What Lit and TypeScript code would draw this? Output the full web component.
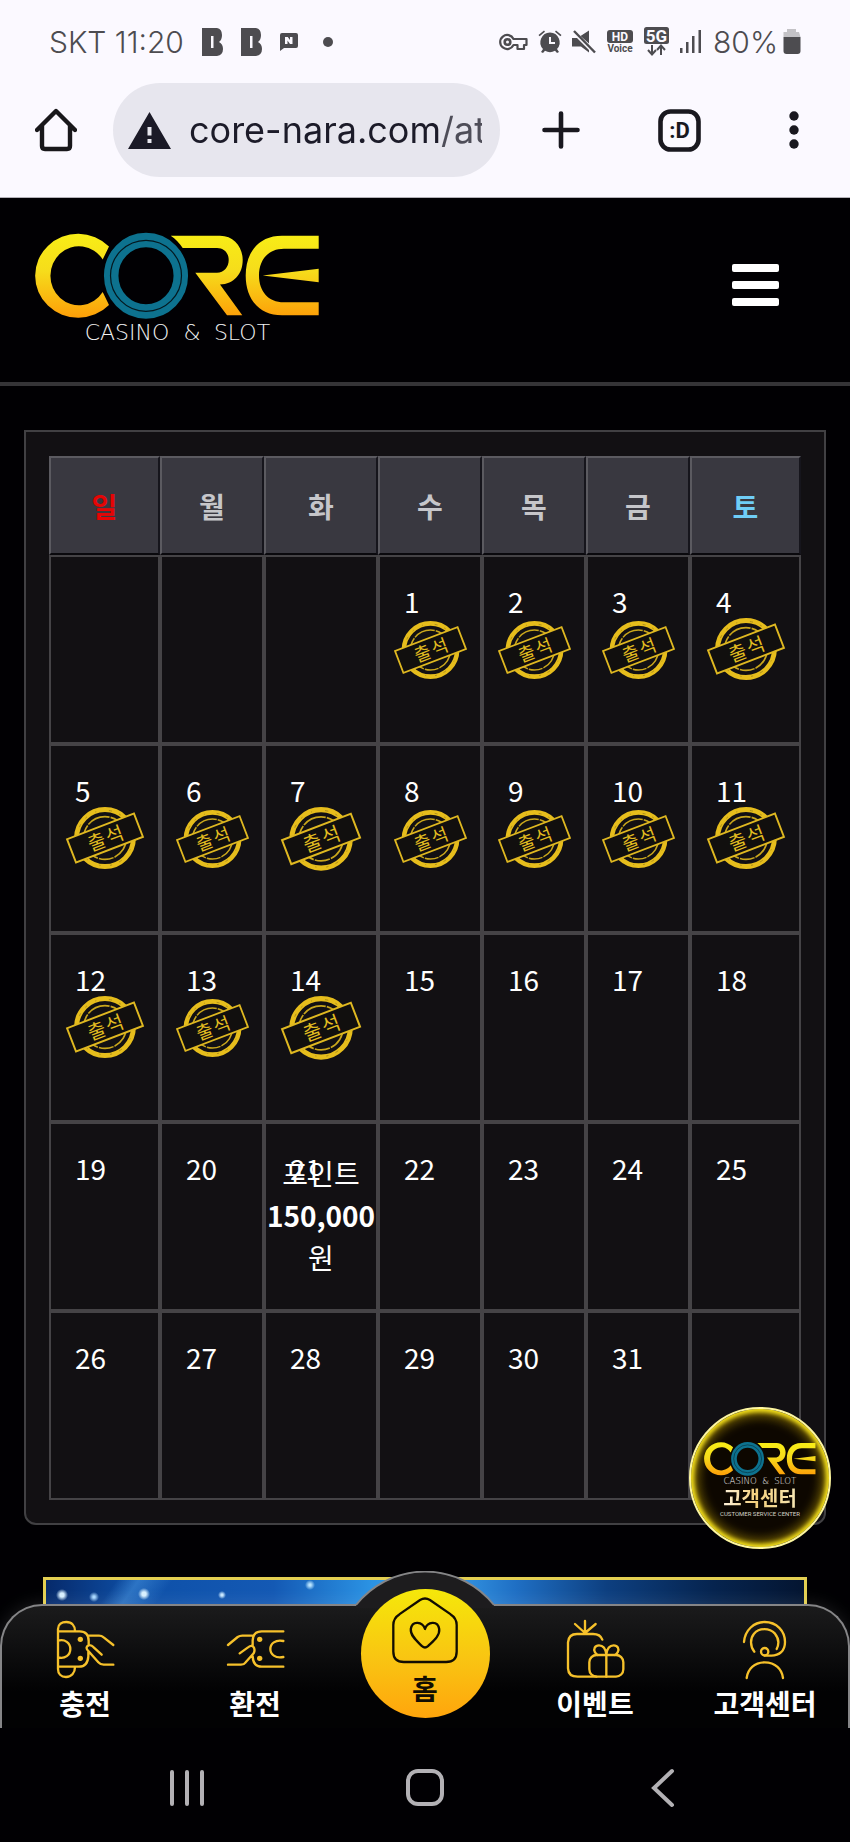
import { LitElement, html, svg, css } from "lit";
import { customElement, property } from "lit/decorators.js";

interface Day {
  day: number | null;
  stamped?: boolean;
  reward?: string;
}

const WEEKDAYS = [
  { label: "일", tone: "sun" },
  { label: "월", tone: "" },
  { label: "화", tone: "" },
  { label: "수", tone: "" },
  { label: "목", tone: "" },
  { label: "금", tone: "" },
  { label: "토", tone: "sat" },
];

const FIRST_WEEKDAY = 3;
const DAYS_IN_MONTH = 31;
const LAST_STAMPED = 14;

function buildWeeks(): Day[][] {
  const cells: Day[] = [];
  for (let i = 0; i < 35; i++) {
    const day = i - FIRST_WEEKDAY + 1;
    if (day < 1 || day > DAYS_IN_MONTH) cells.push({ day: null });
    else
      cells.push({
        day,
        stamped: day <= LAST_STAMPED,
        reward: day === 21 ? "150,000" : undefined,
      });
  }
  return [0, 1, 2, 3, 4].map((w) => cells.slice(w * 7, w * 7 + 7));
}

@customElement("core-logo")
export class CoreLogo extends LitElement {
  static styles = css`
    :host { display: block; }
    svg { display: block; width: 100%; height: auto; overflow: visible; }
    .tag { font-family: "DejaVu Sans", sans-serif; font-weight: 200; font-size: 22px; fill: #f2f2f2; text-anchor: middle; }
  `;
  render() {
    return html`<svg viewBox="35 38 285 112" role="img" aria-label="CORE CASINO &amp; SLOT">
      <defs>
        <linearGradient id="gold" gradientUnits="userSpaceOnUse" x1="0" y1="38" x2="0" y2="123">
          <stop offset="0" stop-color="#f8ee16" />
          <stop offset="0.45" stop-color="#f6dc1b" />
          <stop offset="1" stop-color="#fd9e08" />
        </linearGradient>
      </defs>
      <g fill="url(#gold)">
        <path d="M109 51.5A43 42 0 1 0 109 110L102.7 97A28.5 29.5 0 1 1 102.7 64.5Z" />
        <path d="M170.7 40.7H220C234 40.7 242.7 52 242.7 65C242.7 79 234 89 220 89.5L242.3 120.3H227L195.3 77.7H217C224 77.7 228.7 72 228.7 65C228.7 58 224 53 217 53H182.7C179.5 48 175.5 44 170.7 40.7Z" />
        <path d="M318.7 40.7H282C258 40.7 245.7 58 245.7 80.5C245.7 104 259 120.3 282 120.3H318.7V107.3H284C268 107.3 259 96 259 80.5C259 65 268 53.7 284 53.7H318.7Z" />
        <path d="M262.7 80.5L318.7 73.7V87.3Z" />
      </g>
      <ellipse cx="146" cy="80.8" rx="34.8" ry="35.7" fill="none" stroke="#0d728f" stroke-width="14.5" />
      <ellipse cx="146" cy="80.8" rx="35.5" ry="35.5" fill="none" stroke="#04181f" stroke-width="1.2" />
      <text class="tag" x="127" y="145">CASINO</text>
      <text class="tag" x="192" y="145">&amp;</text>
      <text class="tag" x="242" y="145">SLOT</text>
    </svg>`;
  }
}

@customElement("attendance-stamp")
export class AttendanceStamp extends LitElement {
  static styles = css`
    :host { display: block; width: 71%; margin: 0 auto; }
    svg { display: block; width: 100%; height: auto; overflow: visible; }
    .word { font-family: "Noto Sans CJK KR", sans-serif; font-size: 18px; font-weight: 400; fill: #e2bd20; text-anchor: middle; }
  `;
  render() {
    return html`<svg viewBox="0 0 71 58">
      <circle cx="35.5" cy="29" r="26.6" fill="none" stroke="#e6bd1c" stroke-width="4.6" />
      <circle cx="35.5" cy="29" r="26" fill="none" stroke="#a3861a" stroke-width="0.8" stroke-dasharray="2 9 1 12 3 7" />
      <circle cx="35.5" cy="29" r="20" fill="none" stroke="#c9a61c" stroke-width="1.5" stroke-dasharray="22 1 14 1" />
      <g transform="rotate(-21 35.5 29)">
        <rect x="2" y="17.3" width="67" height="23.4" fill="#110f0e" stroke="#dfb821" stroke-width="1.8" />
        <text class="word" x="27" y="36">출</text>
        <text class="word" x="45" y="36">석</text>
      </g>
    </svg>`;
  }
}

@customElement("phone-status")
export class PhoneStatus extends LitElement {
  static styles = css`
    :host {
      display: flex; justify-content: space-between; align-items: center;
      height: 83px; padding: 0 49px; box-sizing: border-box;
      font: 300 30px/40px Inter, sans-serif; color: #4d4c50;
    }
    svg { display: block; fill: #4d4c50; }
    .group { display: flex; align-items: center; }
    .left { gap: 18px; }
    .right { gap: 10px; }
    .power { display: flex; align-items: center; gap: 5px; }
    .hd { font: 700 12px Roboto, sans-serif; fill: #fbf9ff; }
    .voice { font: 700 10px Roboto, sans-serif; }
    .g5 { font: 700 17px Roboto, sans-serif; fill: #fbf9ff; }
    .mid { text-anchor: middle; }
  `;
  render() {
    const b = html`<svg width="21" height="28" viewBox="0 0 21 28"><path fill-rule="evenodd" d="M0 0H15Q20 1 20 7Q20 12 17 14Q21 16 21 21Q21 27 15 28H0ZM9 8V20H11.500V8Z" /></svg>`;
    return html`
      <div class="group left">
        <span>SKT 11:20</span>${b}${b}
        <svg width="18" height="18" viewBox="0 0 18 18"><path fill-rule="evenodd" d="M2 0H16Q18 0 18 2V13Q18 15 16 15H4L0 18V2Q0 0 2 0ZM5 11H7.500V7.500L10 11H12.500V4H10V7L7.800 4H5Z" /></svg>
        <svg width="24" height="10" viewBox="0 0 24 10"><circle cx="12" cy="5" r="5" /></svg>
      </div>
      <div class="group right">
        <svg width="29" height="18" viewBox="0 0 29 18"><g fill="none" stroke="#4d4c50" stroke-width="2.600"><circle cx="8.500" cy="9" r="2.800" /><path stroke-width="2.200" stroke-linejoin="round" d="M14.500 6A7 7 0 1 0 14.500 12H18.500V16H25V12H27.500V6Z" /></g></svg>
        <svg width="24" height="24" viewBox="0 0 24 24"><path fill-rule="evenodd" d="M12 2.500A9.800 9.800 0 0 1 19 19L21 22L19 23L17 20.800A10 10 0 0 1 7 20.800L5 23L3 22L5 19A9.800 9.800 0 0 1 12 2.500ZM11 7V14H17V12H13V7Z" /><path d="M0.500 5L6 0.500L7 1.800L1.600 6.300ZM23.500 5L18 0.500L17 1.800L22.400 6.300Z" /></svg>
        <svg width="24" height="24" viewBox="0 0 24 24"><path d="M0 8H5L17 20V22.500L9 16.500H0ZM8.500 6L17 0.500V13.500Z" /><path d="M2 1L23 22.500" stroke="#4d4c50" stroke-width="2.400" /></svg>
        <svg width="28" height="24" viewBox="0 0 28 24"><rect x="1" width="26" height="13" rx="3" /><text class="hd mid" x="14" y="10.800">HD</text><text class="voice mid" x="14" y="22">Voice</text></svg>
        <svg width="25" height="30" viewBox="0 0 25 30"><rect width="25" height="17" rx="2.500" /><text class="g5 mid" x="12.500" y="14.500">5G</text><path d="M8 18V27M4 23L8 27.500L12 23M17 28V19M13 23L17 18.500L21 23" fill="none" stroke="#4d4c50" stroke-width="2" /></svg>
        <svg width="24" height="24" viewBox="0 0 24 24"><path d="M1 18H3.500V23H1ZM7 12H9.500V23H7ZM13 6H15.500V23H13ZM19.500 0H22V23H19.500Z" /></svg>
        <div class="power">
          <span>80%</span>
          <svg width="18" height="25" viewBox="0 0 18 25"><path fill="#c3c2c6" d="M4 0H13V3H16L17.500 8H0.500V3H4Z" /><path d="M0.500 8H17.500V22Q17.500 25 14.500 25H3.500Q0.500 25 0.500 22Z" /></svg>
        </div>
      </div>`;
  }
}

@customElement("browser-bar")
export class BrowserBar extends LitElement {
  static styles = css`
    :host { display: flex; align-items: center; padding: 0 39px 20px 35px; border-bottom: 1px solid #b4b2b9; }
    button { border: 0; padding: 0; background: none; display: block; flex: none; }
    svg { display: block; }
    .address {
      flex: 1; min-width: 0; height: 94px; margin: 0 40px 0 36px; padding: 0 18px 0 15px;
      box-sizing: border-box; border-radius: 47px; background: #e7e6ee;
      display: flex; align-items: center; gap: 18px;
    }
    .address svg { flex: none; }
    .url {
      flex: 1; min-width: 0; height: 60px; border: 0; padding: 0; outline: 0;
      font: 400 36px/60px Inter, sans-serif; color: transparent;
      background: linear-gradient(90deg, #1c1b29 251px, #4e4d58 251px); background-clip: text;
    }
    .actions { display: flex; align-items: center; gap: 76px; }
    .face { font: 700 22px Roboto, sans-serif; fill: #19181f; text-anchor: middle; }
  `;
  render() {
    return html`
      <button aria-label="Home"><svg width="42" height="44" viewBox="0 0 42 44"><path d="M2 22L21 3L40 22M7 18V38Q7 41 10 41H32Q35 41 35 38V18" fill="none" stroke="#19181b" stroke-width="4.400" stroke-linejoin="round" stroke-linecap="round" /></svg></button>
      <div class="address">
        <svg width="43" height="37" viewBox="0 0 43 37"><path fill="#1b1a27" fill-rule="evenodd" d="M21.500 0L43 37H0ZM19.500 15V23.500H23.500V15ZM19.500 27V31H23.500V27Z" /></svg>
        <input class="url" type="text" aria-label="Address" .value=${"core-nara.com/at"} />
      </div>
      <div class="actions">
        <button aria-label="New tab"><svg width="42" height="42" viewBox="0 0 42 42"><path d="M21 4.500V37.500M4.500 21H37.500" stroke="#19181f" stroke-width="4.600" stroke-linecap="round" /></svg></button>
        <button aria-label="Tabs"><svg width="43" height="43" viewBox="0 0 43 43"><rect x="2.500" y="2.500" width="38" height="38" rx="10" fill="none" stroke="#19181f" stroke-width="4.600" /><text class="face" x="21.500" y="29">:D</text></svg></button>
        <button aria-label="More"><svg width="34" height="40" viewBox="0 0 34 40"><g fill="#19181f"><circle cx="17" cy="6" r="4.700" /><circle cx="17" cy="20" r="4.700" /><circle cx="17" cy="34" r="4.700" /></g></svg></button>
      </div>`;
  }
}

@customElement("attendance-calendar")
export class AttendanceCalendar extends LitElement {
  @property({ attribute: false }) weeks: Day[][] = buildWeeks();

  static styles = css`
    :host {
      display: block; margin: 44px 24px 52px; padding: 24px 23px 23px;
      border: 2px solid #414043; border-radius: 0 0 12px 12px; background: #121013;
    }
    table { width: 100%; table-layout: fixed; border-collapse: separate; border-spacing: 0; font-size: 28px; line-height: 42px; }
    th, td { box-sizing: border-box; padding: 0; text-align: center; vertical-align: middle; }
    th {
      height: 99px; background: #393840; color: #c6c6ca; font-weight: 700;
      border: 2px solid; border-color: #5b5a60 #16151c #0a090d #5b5a60;
    }
    .sun { color: #e50505; }
    .sat { color: #6fcdf6; }
    td { position: relative; height: 189px; border: 2px solid #454346; color: #fff; }
    .date { position: absolute; top: 23px; left: 24px; }
    .reward { display: block; margin: 0 -2px; padding-bottom: 4px; }
    .w1 { width: 111px; }
    .w2 { width: 104px; }
    .w3 { width: 114px; }
  `;
  render() {
    return html`<table aria-label="출석 달력">
      <colgroup><col class="w1" /><col class="w2" /><col class="w3" /><col class="w2" /><col class="w2" /><col class="w2" /><col class="w1" /></colgroup>
      <thead><tr>${WEEKDAYS.map((d) => html`<th scope="col" class=${d.tone}>${d.label}</th>`)}</tr></thead>
      <tbody>
        ${this.weeks.map((week) => html`<tr>${week.map((d) => html`<td>
          ${d.day ? html`<span class="date">${d.day}</span>` : null}
          ${d.stamped ? html`<attendance-stamp></attendance-stamp>` : null}
          ${d.reward ? html`<span class="reward">포인트<br /><b>${d.reward}</b><br />원</span>` : null}
        </td>`)}</tr>`)}
      </tbody>
    </table>`;
  }
}

const ICONS = {
  charge: svg`<path d="M3 31V137M3 31V24C3 10 14 3 28 3C44 3 54 14 54 30M3 31H68Q95 31 95 60V72M3 137V144C3 158 12 168 27 168C43 168 54 156 54 138M3 137H66Q92 137 94 106V92M3 59C24 53 40 66 40 84C40 102 24 115 3 109M92 44H126Q134 44 140 49L169 72M169 131H140Q130 131 124 124L92 88Q84 78 95 73Q103 71 110 79L134 101" /><circle class="dot" cx="70" cy="55" r="8" /><circle class="dot" cx="70" cy="112" r="8" />`,
  withdraw: svg`<path d="M169 31H104Q78 31 77 58V72M169 137H104Q78 137 77 106M169 60C145 55 130 68 130 84C130 100 145 113 169 108M3 72L32 48Q38 44 46 44H76M3 131H42Q51 131 56 124L80 97Q86 84 78 76Q72 72 63 79L38 97" /><circle class="dot" cx="98" cy="55" r="8" /><circle class="dot" cx="98" cy="112" r="8" />`,
  event: svg`<path d="M106 56Q100 39 78 39H30Q5 39 3 64V142Q4 167 32 167H88M54 38V0M54 36L24 9M54 36L86 9M118 102V167M118 100C116 84 108 73 96 73C84 73 78 84 84 94Q87 100 92 102M118 100C120 84 128 73 140 73C152 73 158 84 152 94Q149 100 144 102" /><rect x="67" y="102" width="102" height="65" rx="22" />`,
  support: svg`<path d="M24 63C27 27 54 3 86 3C122 3 147 30 147 63C147 90 130 104 106 104H86M55 92C42 76 42 52 54 38C70 20 100 20 117 38C130 54 130 68 122 84M32 171C35 145 55 124 86 124C118 124 138 145 141 171" /><circle cx="86" cy="92" r="11" />`,
};

@customElement("bottom-nav")
export class BottomNav extends LitElement {
  static styles = css`
    :host { display: block; position: relative; }
    nav {
      box-sizing: border-box; height: 124px; padding-top: 15px;
      border: 2px solid #858587; border-bottom: 0; border-radius: 42px 42px 0 0;
      background: linear-gradient(#1b1b1c, #020203 70%);
      box-shadow: 0 0 18px rgba(255, 255, 255, 0.12);
    }
    .items { display: grid; grid-template-columns: repeat(5, 1fr); align-items: start; justify-items: center; margin: 0 -2px; }
    a { display: flex; flex-direction: column; align-items: center; gap: 7px; color: #fff; text-decoration: none; font-size: 28px; line-height: 36px; font-weight: 700; white-space: nowrap; }
    .icon { display: block; width: 57px; height: 57px; overflow: visible; fill: none; stroke: #f6c12b; stroke-width: 7; stroke-linecap: round; stroke-linejoin: round; }
    .dot { fill: #f6c12b; stroke: none; }
    .dome { position: absolute; left: 50%; top: -33px; margin-left: -70px; width: 140px; height: 37px; }
    .home {
      width: 129px; height: 129px; margin-top: -32px; padding-top: 8px; box-sizing: border-box; border-radius: 50%;
      background: linear-gradient(#f5e80a, #f9c412 55%, #ffa50c); color: #120d02; position: relative;
    }
    .home .icon { width: 66px; height: 66px; stroke: #120d02; }
  `;
  private item(icon: unknown, label: string) {
    return html`<a href="#"><svg class="icon" viewBox="0 0 171 171" aria-hidden="true">${icon}</svg><span>${label}</span></a>`;
  }
  render() {
    return html`<nav aria-label="메뉴">
      <svg class="dome" viewBox="0 0 140 37" aria-hidden="true"><path d="M1 34A88 88 0 0 1 139 34V37H1Z" fill="#1d1c1e" /><path d="M1 34A88 88 0 0 1 139 34" fill="none" stroke="#858587" stroke-width="2" /></svg>
      <div class="items">
        ${this.item(ICONS.charge, "충전")} ${this.item(ICONS.withdraw, "환전")}
        <a class="home" href="#"><svg class="icon" viewBox="0 0 198 200" aria-hidden="true"><path d="M84 9Q99 0 114 9L176 52Q195 64 195 85V165Q195 197 163 197H35Q3 197 3 165V85Q3 64 22 52ZM99 97C92 74 60 70 56 97C54 118 76 135 90 149Q99 157 108 149C122 135 145 118 142 97C138 70 106 74 99 97Z" /></svg><span>홈</span></a>
        ${this.item(ICONS.event, "이벤트")} ${this.item(ICONS.support, "고객센터")}
      </div>
    </nav>`;
  }
}

@customElement("app-root")
export class AppRoot extends LitElement {
  static styles = css`
    :host { display: block; background: #010003; font-family: "Noto Sans CJK KR", "Noto Sans", sans-serif; }
    .chrome { background: #fbf9ff; }
    .site { position: relative; overflow: hidden; }
    header { display: flex; justify-content: space-between; align-items: flex-start; padding: 35px 71px 37px 35px; border-bottom: 4px solid #353437; }
    core-logo { width: 285px; }
    button { border: 0; padding: 0; background: none; cursor: pointer; }
    .menu { display: grid; gap: 9px; width: 47px; margin-top: 31px; }
    .menu i { height: 8px; border-radius: 2px; background: #fff; }
    .banner {
      height: 151px; margin: 0 43px; box-sizing: border-box; border: 3px solid #e3cf52;
      background:
        radial-gradient(circle at 16px 15px, #d8f0ff 2px, transparent 6px),
        radial-gradient(circle at 48px 17px, #a8d8ff 1px, transparent 5px),
        radial-gradient(circle at 98px 14px, #d8f0ff 2px, transparent 6px),
        radial-gradient(circle at 176px 15px, #c8e8ff 1px, transparent 4px),
        radial-gradient(circle at 264px 5px, #b8e4ff 1px, transparent 5px),
        linear-gradient(125deg, transparent 58px, rgba(90, 170, 240, 0.4) 76px, transparent 104px),
        linear-gradient(90deg, #062a6b, #0e50a8 12%, #1459b4 30%, #2b93e4 43%, #3aa0ec 52%, #1f6fc4 62%, #0d3f80 74%, #06244f 88%, #041531);
    }
    .dock { position: absolute; left: 0; right: 0; bottom: 0; }
    .support {
      position: absolute; right: 19px; bottom: 179px; width: 142px; height: 142px; padding: 33px 0 0; box-sizing: border-box;
      border-radius: 50%; border: 2px solid #fdf6a0; background: radial-gradient(circle, #0d0700 55%, #2e2300 80%, #6d5a02);
      box-shadow: inset 0 0 4px 3px #f4e01c, inset 0 0 14px 4px #9c8206;
      display: flex; flex-direction: column; align-items: center; font-family: inherit;
    }
    .support core-logo { width: 112px; }
    .support strong { font-size: 20px; line-height: 24px; font-weight: 700; background: linear-gradient(90deg, #fff3dc, #f3cf7c 45%, #f6e6b4); background-clip: text; color: transparent; }
    .support small { font: 6px/8px Roboto, sans-serif; color: #d5d2c8; white-space: nowrap; }
    .system { display: grid; grid-template-columns: repeat(3, 1fr); justify-items: center; padding: 40px 68px 34px; }
    .system svg { display: block; width: 40px; height: 40px; fill: none; stroke: #b3b1b5; stroke-width: 4; stroke-linecap: round; }
  `;
  render() {
    return html`
      <div class="chrome"><phone-status></phone-status><browser-bar></browser-bar></div>
      <div class="site">
        <header>
          <core-logo></core-logo>
          <button class="menu" aria-label="메뉴 열기"><i></i><i></i><i></i></button>
        </header>
        <main>
          <attendance-calendar></attendance-calendar>
          <div class="banner"></div>
        </main>
        <button class="support"><core-logo></core-logo><strong>고객센터</strong><small>CUSTOMER SERVICE CENTER</small></button>
        <bottom-nav class="dock"></bottom-nav>
      </div>
      <div class="system">
        <button aria-label="Recent apps"><svg viewBox="0 0 40 40"><path d="M5 4V36M20 4V36M35 4V36" /></svg></button>
        <button aria-label="Home"><svg viewBox="0 0 40 40"><rect x="3" y="3" width="34" height="33" rx="10" /></svg></button>
        <button aria-label="Back"><svg viewBox="0 0 40 40"><path d="M29 3L11 20L29 37" /></svg></button>
      </div>`;
  }
}
